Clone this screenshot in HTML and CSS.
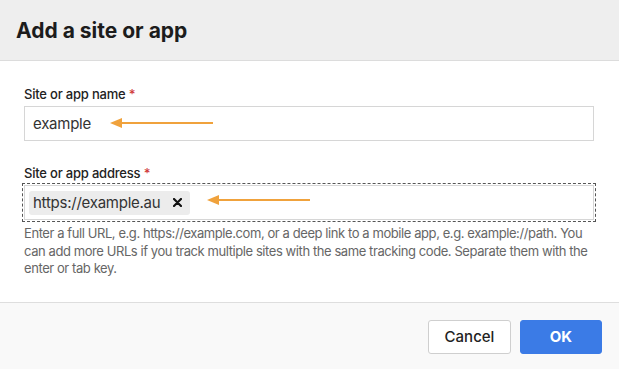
FILE: index.html
```html
<!DOCTYPE html>
<html lang="en">
<head>
    <meta charset="UTF-8">
    <meta name="viewport" content="width=device-width, initial-scale=1.0">
    <title>Add a site or app</title>
    <link rel="stylesheet" href="styles.css">
</head>
<body>
    <div class="dialog">
        <!-- Header -->
        <div class="dialog-header">
            <h1>Add a site or app</h1>
        </div>

        <!-- Form -->
        <div class="dialog-body">
            <div class="field">
                <label class="label">Site or app name <span class="req">*</span></label>
                <div class="input">example</div>
                <svg class="arrow arrow-name" width="104" height="12" viewBox="0 0 104 12">
                    <line x1="6" y1="6" x2="103" y2="6" stroke="#f0a23c" stroke-width="2"/>
                    <path d="M0 6 L12 1 L12 11 Z" fill="#f0a23c"/>
                </svg>
            </div>

            <div class="field">
                <label class="label">Site or app address <span class="req">*</span></label>
                <div class="input input-tags">
                    <span class="chip">https://example.au
                        <svg class="chip-x" width="9" height="9" viewBox="0 0 9 9">
                            <path d="M1 1 L8 8 M8 1 L1 8" stroke="#111" stroke-width="2.2" stroke-linecap="round"/>
                        </svg>
                    </span>
                </div>
                <svg class="arrow arrow-address" width="104" height="12" viewBox="0 0 104 12">
                    <line x1="6" y1="6" x2="103" y2="6" stroke="#f0a23c" stroke-width="2"/>
                    <path d="M0 6 L12 1 L12 11 Z" fill="#f0a23c"/>
                </svg>
                <p class="help">Enter a full URL, e.g. https://example.com, or a deep link to a mobile app, e.g. example://path. You can add more URLs if you track multiple sites with the same tracking code. Separate them with the enter or tab key.</p>
            </div>
        </div>

        <!-- Footer -->
        <div class="dialog-footer">
            <button class="btn">Cancel</button>
            <button class="btn btn-primary">OK</button>
        </div>
    </div>
</body>
</html>
```

FILE: styles.css
```css
/* Reset */
* {
    box-sizing: border-box;
    margin: 0;
    padding: 0;
}
body {
    font-family: Inter, "Noto Sans", sans-serif;
    background: #fff;
    color: #222;
}

.dialog {
    width: 619px;
    height: 369px;
    display: flex;
    flex-direction: column;
}

/* Header */
.dialog-header {
    height: 62px;
    background-color: #eeeeee;
    border-bottom: 1px solid #dcdcdc;
    display: flex;
    align-items: center;
    padding-left: 16px;
}
.dialog-header h1 {
    font-size: 21px;
    font-weight: 700;
    color: #1c1c1c;
}

/* Body */
.dialog-body {
    padding: 25px 25px 0 24px;
    flex: 1;
    border-bottom: 1px solid #dedede;
}
.field {
    position: relative;
    margin-bottom: 24px;
}
.label {
    display: block;
    font-size: 13px;
    font-weight: 500;
    line-height: 16px;
    letter-spacing: -0.2px;
    color: #222;
    margin-bottom: 4px;
}
.req {
    color: #d03a3a;
}
.input {
    height: 35px;
    border: 1px solid #d6d6d6;
    font-size: 15px;
    letter-spacing: -0.25px;
    color: #333;
    padding-left: 8px;
    display: flex;
    align-items: center;
}
.input-tags {
    padding-left: 4px;
    outline: 1px dashed #555;
    outline-offset: 1px;
}
.chip {
    background-color: #ececec;
    border-radius: 3px;
    height: 24px;
    display: flex;
    align-items: center;
    padding: 0 8px 0 4px;
    color: #333;
}
.chip-x {
    margin-left: 13px;
}
.help {
    font-size: 13px;
    line-height: 17.5px;
    letter-spacing: -0.42px;
    color: #666;
    margin-top: 5px;
}

/* Orange pointers */
.arrow {
    position: absolute;
}
.arrow-name {
    left: 86px;
    top: 31px;
}
.arrow-address {
    left: 183px;
    top: 29px;
}

/* Footer */
.dialog-footer {
    height: 67px;
    background-color: #f9f9f9;
    display: flex;
    justify-content: flex-end;
    align-items: flex-start;
    gap: 9px;
    padding: 17px 17px 0 0;
}
.btn {
    width: 83px;
    height: 34px;
    font-family: Inter, "Noto Sans", sans-serif;
    font-size: 15px;
    font-weight: 500;
    color: #222;
    background-color: #fff;
    border: 1px solid #cfcfcf;
    border-radius: 3px;
}
.btn-primary {
    width: 82px;
    background-color: #3b7be6;
    border-color: #3b7be6;
    color: #fff;
    font-weight: 700;
}
```
